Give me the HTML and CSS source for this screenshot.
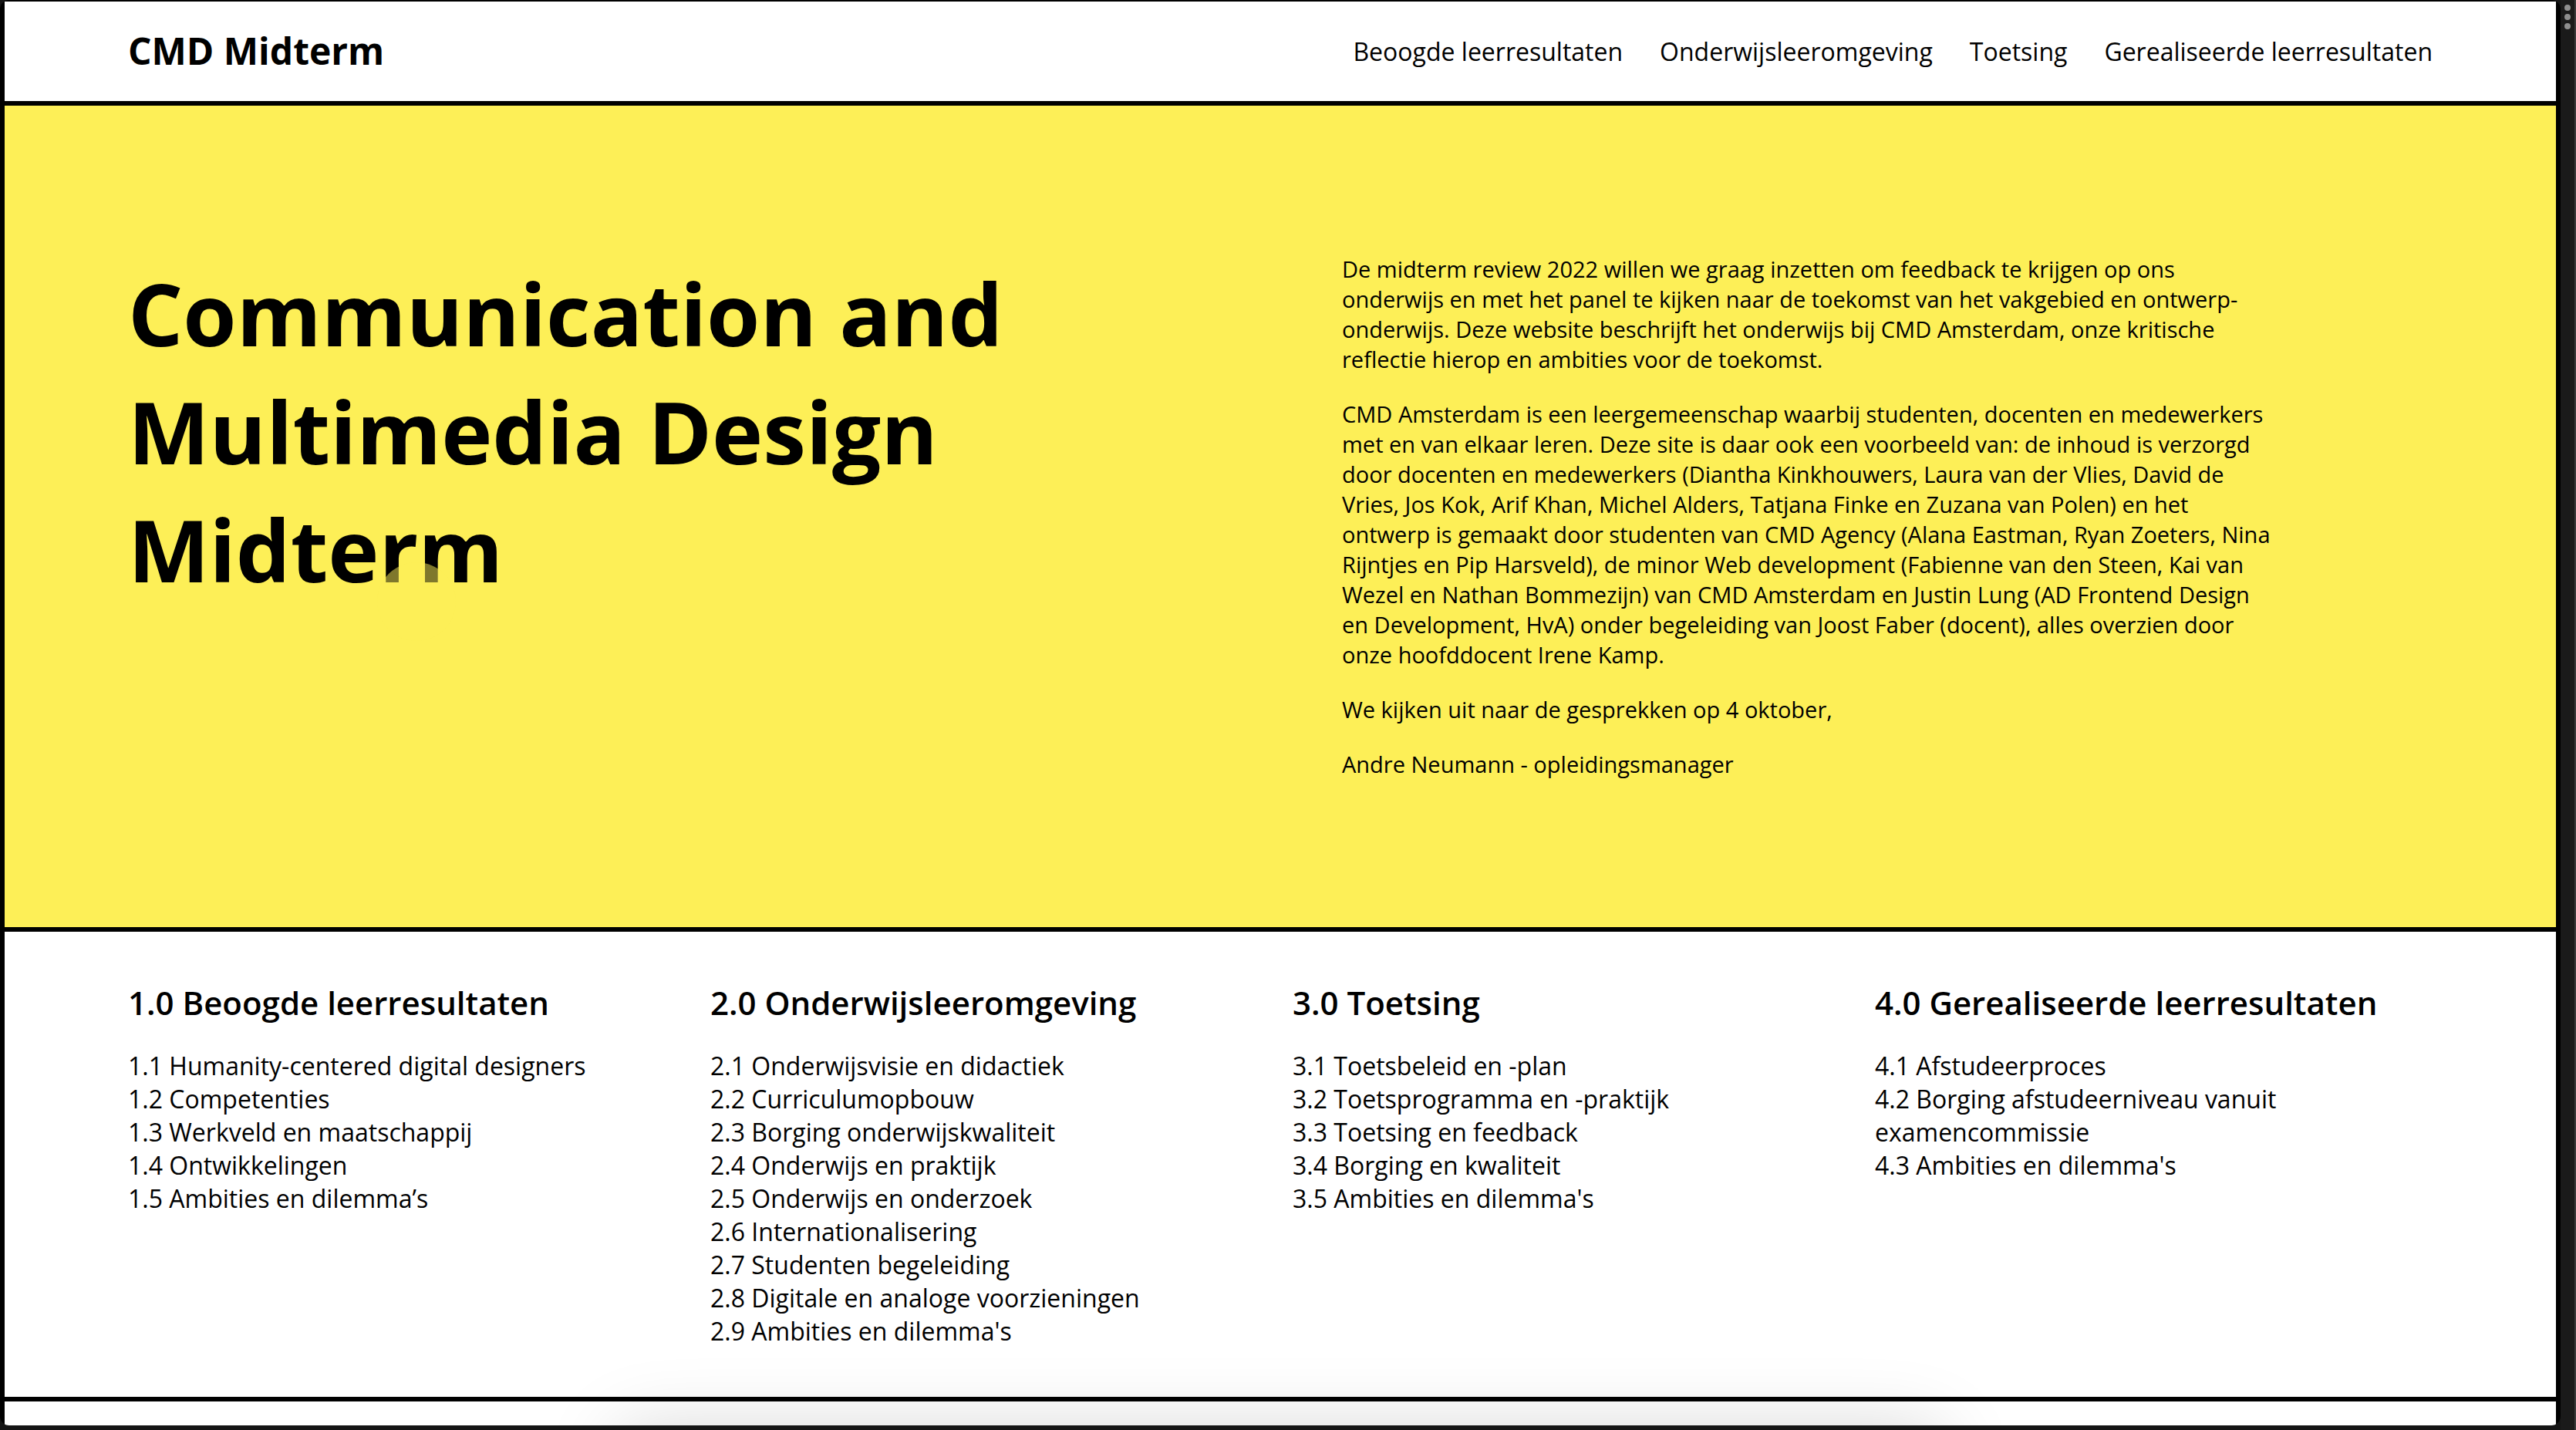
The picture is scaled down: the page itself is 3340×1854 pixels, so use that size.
FILE: index.html
```html
<!DOCTYPE html>
<html lang="nl">
<head>
<meta charset="utf-8">
<meta name="viewport" content="width=device-width, initial-scale=1">
<title>CMD Midterm</title>
<link rel="stylesheet" href="styles.css">
</head>
<body>
<div class="screen">
<div class="window">
<div class="page">
<header class="header">
<a class="brand" href="#">CMD Midterm</a>
<nav class="nav">
<a href="#h1">Beoogde leerresultaten</a>
<a href="#h2">Onderwijsleeromgeving</a>
<a href="#h3">Toetsing</a>
<a href="#h4">Gerealiseerde leerresultaten</a>
</nav>
</header>
<main>
<section class="hero">
<h1 class="title">Communication and<br>Multimedia Design<br>Midterm<span class="spot" aria-hidden="true"></span></h1>
<div class="intro">
<p>De midterm review 2022 willen we graag inzetten om feedback te krijgen op ons<br>onderwijs en met het panel te kijken naar de toekomst van het vakgebied en ontwerp-<br>onderwijs. Deze website beschrijft het onderwijs bij CMD Amsterdam, onze kritische<br>reflectie hierop en ambities voor de toekomst.</p>
<p>CMD Amsterdam is een leergemeenschap waarbij studenten, docenten en medewerkers<br>met en van elkaar leren. Deze site is daar ook een voorbeeld van: de inhoud is verzorgd<br>door docenten en medewerkers (Diantha Kinkhouwers, Laura van der Vlies, David de<br>Vries, Jos Kok, Arif Khan, Michel Alders, Tatjana Finke en Zuzana van Polen) en het<br>ontwerp is gemaakt door studenten van CMD Agency (Alana Eastman, Ryan Zoeters, Nina<br>Rijntjes en Pip Harsveld), de minor Web development (Fabienne van den Steen, Kai van<br>Wezel en Nathan Bommezijn) van CMD Amsterdam en Justin Lung (AD Frontend Design<br>en Development, HvA) onder begeleiding van Joost Faber (docent), alles overzien door<br>onze hoofddocent Irene Kamp.</p>
<p>We kijken uit naar de gesprekken op 4 oktober,</p>
<p>Andre Neumann - opleidingsmanager</p>
</div>
</section>
<section class="contents">
<div class="chapter">
<h2 id="h1">1.0 Beoogde leerresultaten</h2>
<ul>
<li><a href="#">1.1 Humanity-centered digital designers</a></li>
<li><a href="#">1.2 Competenties</a></li>
<li><a href="#">1.3 Werkveld en maatschappij</a></li>
<li><a href="#">1.4 Ontwikkelingen</a></li>
<li><a href="#">1.5 Ambities en dilemma’s</a></li>
</ul>
</div>
<div class="chapter">
<h2 id="h2">2.0 Onderwijsleeromgeving</h2>
<ul>
<li><a href="#">2.1 Onderwijsvisie en didactiek</a></li>
<li><a href="#">2.2 Curriculumopbouw</a></li>
<li><a href="#">2.3 Borging onderwijskwaliteit</a></li>
<li><a href="#">2.4 Onderwijs en praktijk</a></li>
<li><a href="#">2.5 Onderwijs en onderzoek</a></li>
<li><a href="#">2.6 Internationalisering</a></li>
<li><a href="#">2.7 Studenten begeleiding</a></li>
<li><a href="#">2.8 Digitale en analoge voorzieningen</a></li>
<li><a href="#">2.9 Ambities en dilemma's</a></li>
</ul>
</div>
<div class="chapter">
<h2 id="h3">3.0 Toetsing</h2>
<ul>
<li><a href="#">3.1 Toetsbeleid en -plan</a></li>
<li><a href="#">3.2 Toetsprogramma en -praktijk</a></li>
<li><a href="#">3.3 Toetsing en feedback</a></li>
<li><a href="#">3.4 Borging en kwaliteit</a></li>
<li><a href="#">3.5 Ambities en dilemma's</a></li>
</ul>
</div>
<div class="chapter">
<h2 id="h4">4.0 Gerealiseerde leerresultaten</h2>
<ul>
<li><a href="#">4.1 Afstudeerproces</a></li>
<li><a href="#">4.2 Borging afstudeerniveau vanuit<br>examencommissie</a></li>
<li><a href="#">4.3 Ambities en dilemma's</a></li>
</ul>
</div>
</section>
</main>
<div class="glow" aria-hidden="true"></div>
</div>
</div>
<aside class="rail" aria-hidden="true"><i></i><i></i><i></i></aside>
</div>
</body>
</html>
```
FILE: styles.css
```css
* { box-sizing: border-box; }

body {
  margin: 0;
  background: #151515;
  color: #000;
  font-family: "Open Sans", sans-serif;
}

a { color: inherit; text-decoration: none; }
h1, h2, p, ul { margin: 0; padding: 0; }
ul { list-style: none; }

/* Window frame */
.screen {
  display: flex;
  min-height: 100vh;
}

.window {
  flex: 1;
  display: flex;
  margin-bottom: 6px;
  padding: 2px 6px 0;
  background: #000;
  border-radius: 12px;
  overflow: hidden;
}

.page {
  position: relative;
  flex: 1;
  background: #fff;
  overflow: hidden;
}

.rail {
  display: flex;
  flex-direction: column;
  align-items: center;
  gap: 4px;
  width: 20px;
  padding-top: 6px;
  background: #1a1a1a;
  border-right: 2px solid #3a3a3a;
}

.rail i {
  width: 8px;
  height: 8px;
  border-radius: 50%;
  background: #8e8e8e;
}

/* Header */
.header {
  display: flex;
  align-items: center;
  justify-content: space-between;
  padding: 31px 160px 32px;
  border-bottom: 6px solid #000;
}

.brand { font-size: 48px; line-height: 66px; font-weight: 700; }
.nav { display: flex; gap: 48px; font-size: 32px; line-height: 43px; }

/* Hero */
.hero {
  display: grid;
  grid-template-columns: 1fr 1fr;
  padding: 192px 160px;
  background: #fdef57;
  border-bottom: 6px solid #000;
}

.title {
  position: relative;
  font-size: 112px;
  line-height: 153px;
  font-weight: 700;
}

.spot {
  position: absolute;
  top: 400px;
  left: 323px;
  width: 102px;
  height: 102px;
  border-radius: 50%;
  background: #fdef57;
  opacity: .5;
}

.intro {
  display: flex;
  flex-direction: column;
  gap: 32px;
  padding-left: 80px;
  font-size: 29px;
  line-height: 39px;
}

/* Table of contents */
.contents {
  display: grid;
  grid-template-columns: repeat(4, 1fr);
  gap: 32px;
  padding: 64px 160px;
  border-bottom: 6px solid #000;
}

.chapter h2 {
  margin-bottom: 32px;
  font-size: 42px;
  line-height: 56px;
  font-weight: 600;
}

.chapter li { font-size: 32px; line-height: 43px; }

/* Soft shadow rising from the bottom edge */
.glow {
  position: absolute;
  bottom: -126px;
  left: 24%;
  right: 24%;
  height: 120px;
  border-radius: 32px;
  box-shadow: 0 0 96px rgba(0, 0, 0, .17);
}
```
